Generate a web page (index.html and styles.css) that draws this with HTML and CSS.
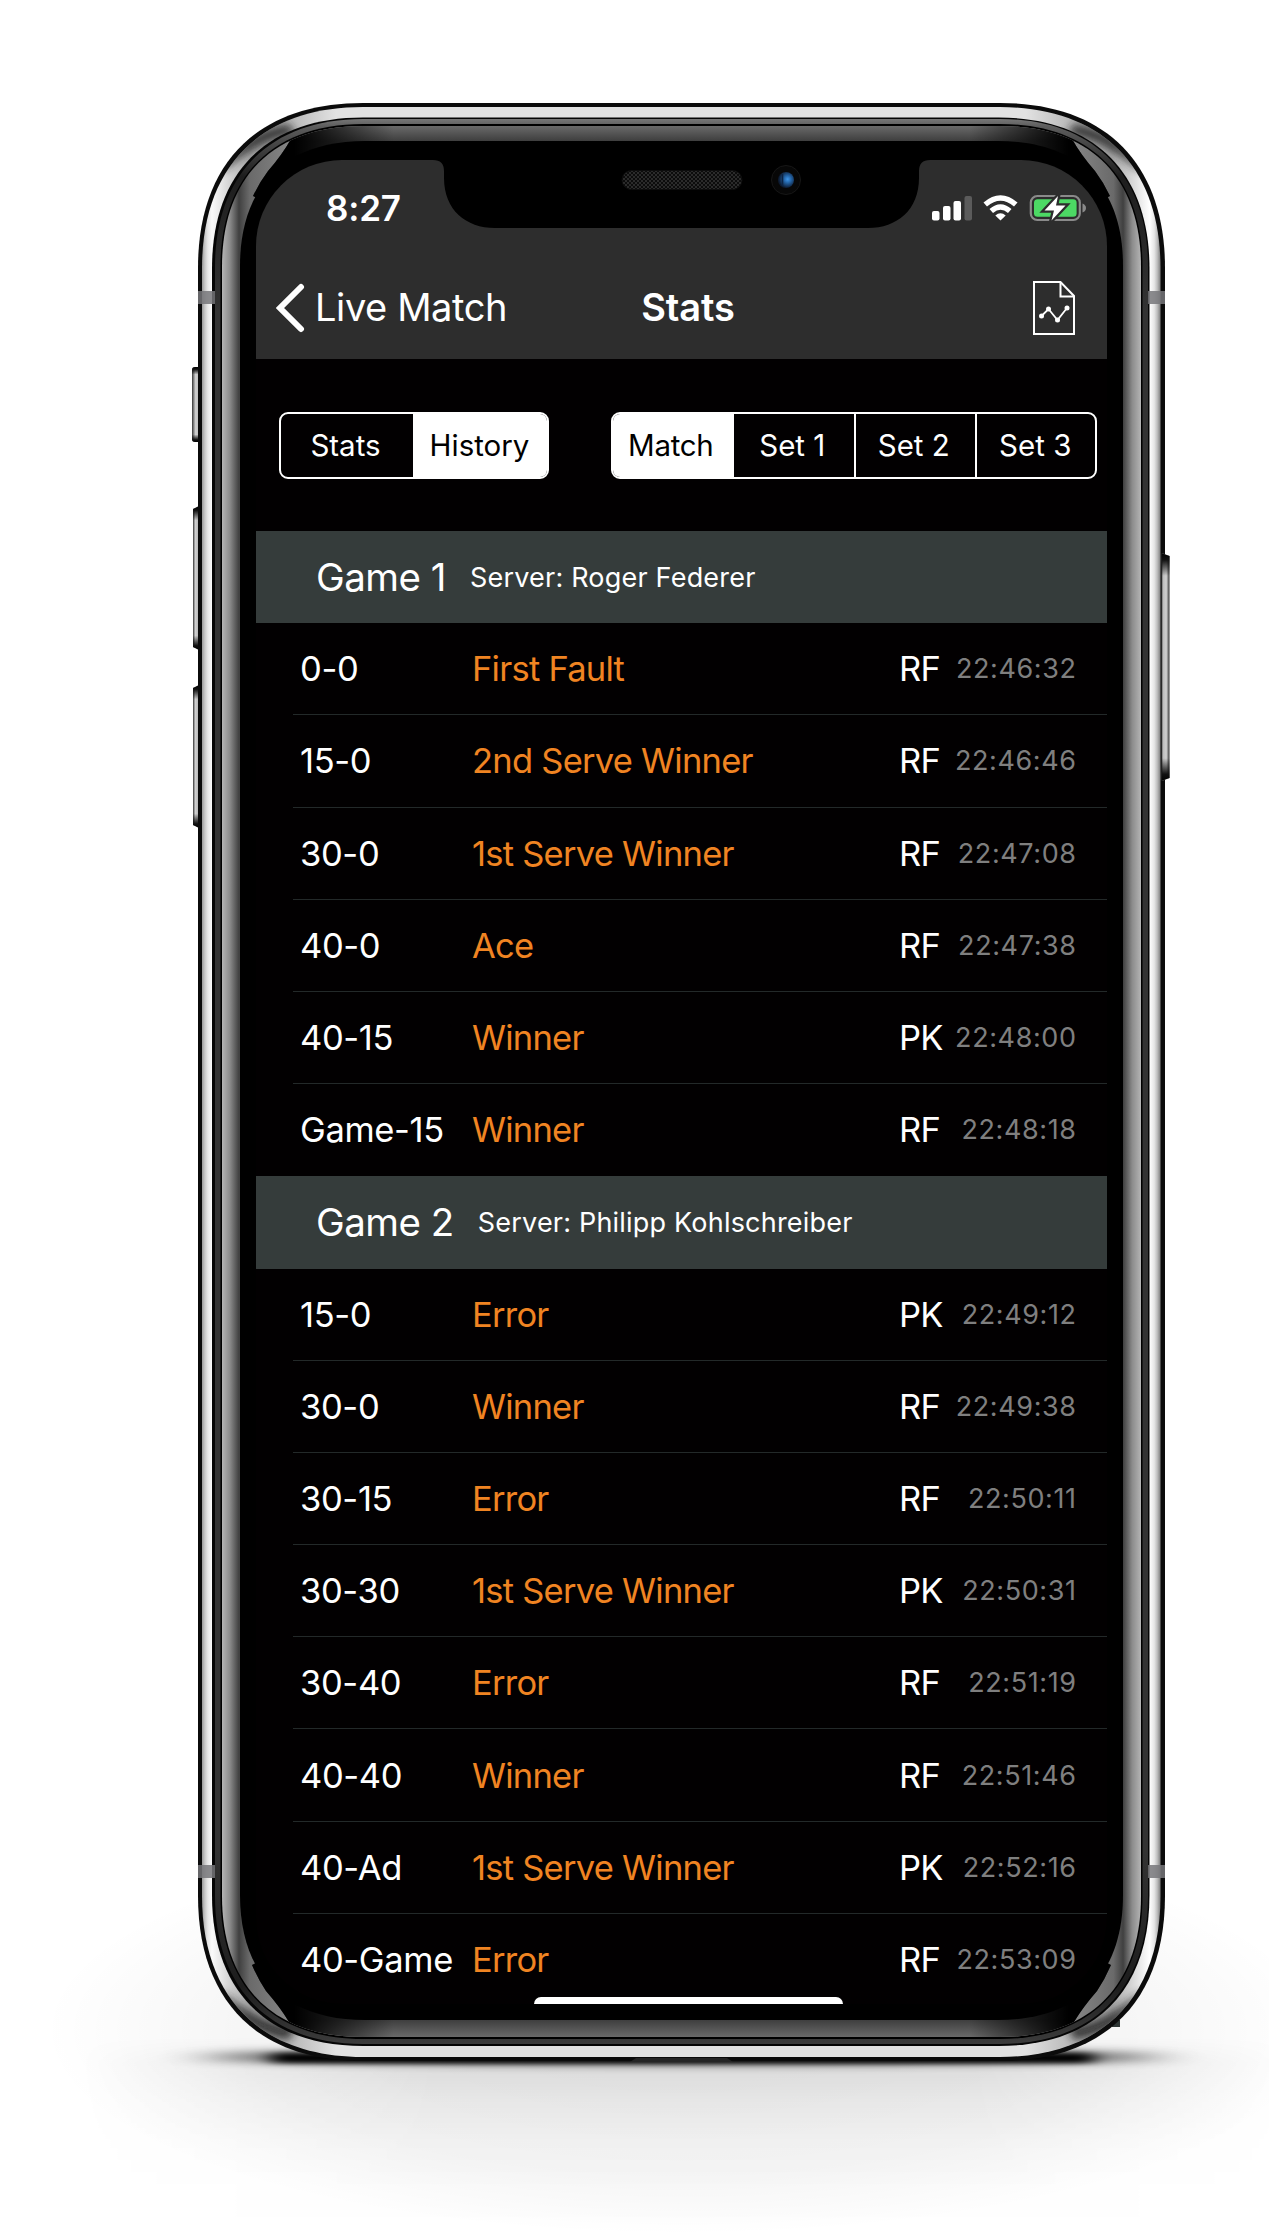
FILE: index.html
```html
<!DOCTYPE html>
<html lang="en">
<head>
<meta charset="utf-8">
<title>Live Match Stats</title>
<link rel="stylesheet" href="styles.css">
</head>
<body>
<main class="stage">
  <svg class="frame" viewBox="0 0 1269 2237" aria-hidden="true">
    <defs>
      <filter id="soft" x="-20%" y="-400%" width="140%" height="900%"><feGaussianBlur stdDeviation="26 5"/></filter>
      <filter id="tight" x="-20%" y="-200%" width="140%" height="500%"><feGaussianBlur stdDeviation="10 2.5"/></filter>
      <filter id="blur4"><feGaussianBlur stdDeviation="4"/></filter>
      <radialGradient id="haze" cx=".5" cy=".5" r=".5">
        <stop offset="0" stop-color="#000" stop-opacity=".06"/>
        <stop offset=".7" stop-color="#000" stop-opacity=".035"/>
        <stop offset="1" stop-color="#000" stop-opacity="0"/>
      </radialGradient>
      <linearGradient id="floor" gradientUnits="userSpaceOnUse" x1="0" y1="2037" x2="0" y2="2237">
        <stop offset="0" stop-color="#000" stop-opacity="0"/>
        <stop offset=".13" stop-color="#000" stop-opacity=".1"/>
        <stop offset=".32" stop-color="#000" stop-opacity=".05"/>
        <stop offset=".52" stop-color="#000" stop-opacity=".02"/>
        <stop offset=".75" stop-color="#000" stop-opacity=".005"/>
        <stop offset="1" stop-color="#000" stop-opacity="0"/>
      </linearGradient>
      <linearGradient id="spread" gradientUnits="userSpaceOnUse" x1="80" y1="0" x2="1269" y2="0">
        <stop offset="0" stop-color="#000"/><stop offset=".12" stop-color="#777"/><stop offset=".3" stop-color="#fff"/>
        <stop offset=".75" stop-color="#fff"/><stop offset=".9" stop-color="#777"/><stop offset="1" stop-color="#111"/>
      </linearGradient>
      <mask id="spreadMask"><rect y="2000" width="1269" height="237" fill="url(#spread)"/></mask>
      <linearGradient id="silver" gradientUnits="userSpaceOnUse" x1="202" y1="0" x2="1160" y2="0">
        <stop offset="0" stop-color="#9a9a9a"/><stop offset=".003" stop-color="#c8c8c8"/><stop offset=".006" stop-color="#e6e6e6"/>
        <stop offset=".0104" stop-color="#fafafa"/><stop offset=".05" stop-color="#a8a8a8"/><stop offset=".09" stop-color="#b5b5b5"/><stop offset=".14" stop-color="#e2e2e2"/>
        <stop offset=".86" stop-color="#e2e2e2"/><stop offset=".91" stop-color="#b5b5b5"/><stop offset=".95" stop-color="#a8a8a8"/><stop offset=".989" stop-color="#fff"/>
        <stop offset=".994" stop-color="#e6e6e6"/><stop offset=".997" stop-color="#c0c0c0"/><stop offset="1" stop-color="#888"/>
      </linearGradient>
      <linearGradient id="glass" gradientUnits="userSpaceOnUse" x1="222" y1="0" x2="1141" y2="0">
        <stop offset="0" stop-color="#b4b4b4"/><stop offset=".0085" stop-color="#8c8c8c"/><stop offset=".0185" stop-color="#404040"/>
        <stop offset=".03" stop-color="#6a6a6a"/><stop offset=".08" stop-color="#8a8a8a"/>
        <stop offset=".92" stop-color="#8a8a8a"/><stop offset=".97" stop-color="#6a6a6a"/>
        <stop offset=".9805" stop-color="#404040"/><stop offset=".9905" stop-color="#8c8c8c"/><stop offset="1" stop-color="#b4b4b4"/>
      </linearGradient>
      <linearGradient id="bandTop" gradientUnits="userSpaceOnUse" x1="0" y1="126" x2="0" y2="141">
        <stop offset="0" stop-color="#6a6a6a"/><stop offset="1" stop-color="#3e3e3e"/>
      </linearGradient>
      <linearGradient id="bandBottom" gradientUnits="userSpaceOnUse" x1="0" y1="2020" x2="0" y2="2037">
        <stop offset="0" stop-color="#3e3e3e"/><stop offset="1" stop-color="#6a6a6a"/>
      </linearGradient>
      <linearGradient id="fade" gradientUnits="userSpaceOnUse" x1="270" y1="0" x2="1093" y2="0">
        <stop offset="0" stop-color="#000"/><stop offset=".03" stop-color="#000"/><stop offset=".15" stop-color="#000" stop-opacity="0"/>
        <stop offset=".85" stop-color="#000" stop-opacity="0"/><stop offset=".97" stop-color="#000"/><stop offset="1" stop-color="#000"/>
      </linearGradient>
      <linearGradient id="rim" gradientUnits="userSpaceOnUse" x1="0" y1="119" x2="0" y2="2044">
        <stop offset="0" stop-color="#777"/><stop offset=".004" stop-color="#5c5c5c"/><stop offset=".03" stop-color="#1d1d1d"/><stop offset=".1" stop-color="#333"/>
        <stop offset=".9" stop-color="#333"/><stop offset=".97" stop-color="#1d1d1d"/><stop offset="1" stop-color="#3c3c3c"/>
      </linearGradient>
      <linearGradient id="keyV" x1="0" y1="0" x2="0" y2="1">
        <stop offset="0" stop-color="#000"/><stop offset=".03" stop-color="#111"/><stop offset=".1" stop-color="#000" stop-opacity="0"/>
        <stop offset=".9" stop-color="#000" stop-opacity="0"/><stop offset=".97" stop-color="#111"/><stop offset="1" stop-color="#000"/>
      </linearGradient>
      <linearGradient id="keyL" x1="0" y1="0" x2="1" y2="0">
        <stop offset="0" stop-color="#333"/><stop offset=".2" stop-color="#888"/><stop offset=".4" stop-color="#d0d0d0"/><stop offset=".8" stop-color="#bdbdbd"/><stop offset="1" stop-color="#444"/>
      </linearGradient>
      <linearGradient id="keyR" x1="1" y1="0" x2="0" y2="0">
        <stop offset="0" stop-color="#333"/><stop offset=".2" stop-color="#888"/><stop offset=".4" stop-color="#d0d0d0"/><stop offset=".8" stop-color="#bdbdbd"/><stop offset="1" stop-color="#444"/>
      </linearGradient>
      <pattern id="mesh" width="4" height="4" patternUnits="userSpaceOnUse">
        <rect width="4" height="4" fill="#0c0c0c"/><path d="M0 0h2v2h-2zM2 2h2v2h-2z" fill="#2b2b2b"/>
      </pattern>
      <radialGradient id="lens" cx=".6" cy=".45" r=".55">
        <stop offset="0" stop-color="#3f97e8"/><stop offset=".4" stop-color="#2465a8"/><stop offset="1" stop-color="#0c1a30"/>
      </radialGradient>
      <clipPath id="silverClip"><path d="M363 107H999.500c102 0 161 59 161 161V1896c0 102-59 161-161 161H363c-102 0-161-59-161-161V268c0-102 59-161 161-161z"/></clipPath>
      <clipPath id="glassClip"><path d="M363 126H1000c90 0 141 51 141 141V1896c0 90-51 141-141 141H363c-90 0-141-51-141-141V267c0-90 51-141 141-141z"/></clipPath>
    </defs>

    <!-- floor shadow -->
    <ellipse cx="682" cy="2030" rx="640" ry="205" fill="url(#haze)"/>
    <rect y="2037" width="1269" height="200" fill="url(#floor)" mask="url(#spreadMask)"/>
    <ellipse cx="682" cy="2057" rx="480" ry="7" fill="#000" opacity=".75" filter="url(#soft)"/>
    <rect x="270" y="2053" width="824" height="10" rx="5" fill="#000" filter="url(#tight)"/>

    <!-- side keys -->
    <rect x="192" y="367" width="9" height="75" rx="3" fill="url(#keyL)"/><rect x="192" y="367" width="9" height="75" rx="3" fill="url(#keyV)"/>
    <path d="M193 509l6-3v144l-6-3z" fill="url(#keyL)"/><path d="M193 509l6-3v144l-6-3z" fill="url(#keyV)"/>
    <path d="M193 688l6-3v143l-6-3z" fill="url(#keyL)"/><path d="M193 688l6-3v143l-6-3z" fill="url(#keyV)"/>
    <rect x="1112" y="2020" width="8" height="7" fill="#2e3635"/>

    <!-- metal band -->
    <path d="M363 103H1000c105 0 165 60 165 165V1896c0 105-60 165-165 165H363c-105 0-165-60-165-165V268c0-105 60-165 165-165z" fill="#0b0b0b"/>
    <path d="M1161.500 553l8 3v222l-8 3z" fill="url(#keyR)"/><path d="M1161.500 553l8 3v222l-8 3z" fill="url(#keyV)"/>
    <path d="M363 107H999.500c102 0 161 59 161 161V1896c0 102-59 161-161 161H363c-102 0-161-59-161-161V268c0-102 59-161 161-161z" fill="url(#silver)"/>
    <g clip-path="url(#silverClip)">
      <g filter="url(#blur4)" fill="#222" opacity=".85">
        <path d="M220 172Q245 130 288 124L296 134Q258 140 228 168z"/>
        <path d="M1143 172Q1118 130 1075 124L1067 134Q1105 140 1135 168z"/>
        <path d="M220 1990Q245 2034 288 2040L296 2028Q258 2022 228 1996z"/>
        <path d="M1143 1990Q1118 2034 1075 2040L1067 2028Q1105 2022 1135 1996z"/>
      </g>
    </g>
    <path d="M363 117.500H998.500c96 0 151 55 151 151V1895c0 96-55 151-151 151H363c-96 0-151-55-151-151V268.500c0-96 55-151 151-151z" fill="#050505"/>
    <path d="M363 119H1000c93 0 148 55 148 148V1896c0 93-55 148-148 148H363c-93 0-148-55-148-148V267c0-93 55-148 148-148z" fill="url(#rim)"/>
    <path d="M363 124H1000c90 0 142.500 52.500 142.500 142.500V1896.500c0 90-52.500 142.500-142.500 142.500H363c-90 0-142.500-52.500-142.500-142.500V266.500c0-90 52.500-142.500 142.500-142.500z" fill="#000"/>
    <path d="M636 2058H727L733 2062H630z" fill="#242424"/>

    <!-- glass edge -->
    <g clip-path="url(#glassClip)">
      <rect x="222" y="126" width="919" height="1911" fill="url(#glass)"/>
      <path id="upper" d="M291 139Q282 155 268 171Q259 183 253 196L340 240H1023L1110 196Q1104 183 1095 171Q1081 155 1072 139V120H291z" fill="url(#bandTop)"/>
      <path d="M291 139Q282 155 268 171Q259 183 253 196L340 240H1023L1110 196Q1104 183 1095 171Q1081 155 1072 139V120H291z" fill="url(#fade)"/>
      <path d="M289 2022Q280 2007 266 1991Q258 1979 252 1965L340 1920H1023L1111 1965Q1105 1979 1097 1991Q1083 2007 1074 2022V2040H289z" fill="url(#bandBottom)"/>
      <path d="M289 2022Q280 2007 266 1991Q258 1979 252 1965L340 1920H1023L1111 1965Q1105 1979 1097 1991Q1083 2007 1074 2022V2040H289z" fill="url(#fade)"/>
    </g>
    <path d="M365 141H998c80 0 125 45 125 125V1895c0 80-45 125-125 125H365c-80 0-125-45-125-125V266c0-80 45-125 125-125z" fill="#000"/>

    <!-- antenna bands -->
    <g fill="#77777a" opacity=".85">
      <rect x="198" y="291" width="17" height="13"/><rect x="1148" y="291" width="17" height="13"/>
      <rect x="198" y="1865" width="17" height="13"/><rect x="1148" y="1865" width="17" height="13"/>
    </g>
  </svg>

  <section class="screen">
    <header class="top">
      <div class="status">
        <span class="clock">8:27</span>
        <svg class="indicators" width="156" height="28" viewBox="0 0 156 28" aria-hidden="true">
          <g fill="#fff">
            <rect x="0" y="17" width="7.500" height="9.500" rx="2"/>
            <rect x="11" y="12" width="7.500" height="14.500" rx="2"/>
            <rect x="21.500" y="7" width="7.500" height="19.500" rx="2"/>
            <rect x="32.500" y="2" width="7.500" height="24.500" rx="2" opacity=".22"/>
            <path d="M51.500 8.500Q68.500-6 85.500 8.500L82 12.500Q68.500 1 55 12.500z"/>
            <path d="M57.500 15Q68.500 5.500 79.500 15L76 19Q68.500 12.500 61 19z"/>
            <path d="M63.300 21.500Q68.500 17 73.700 21.500L68.500 26.500z"/>
          </g>
          <rect x="98.800" y="2" width="49" height="24" rx="6.500" fill="none" stroke="#8a8a8a" stroke-width="2.200"/>
          <path d="M150.500 9.500q3.500 1.500 3.500 4.500t-3.500 4.500z" fill="#8a8a8a"/>
          <rect x="102" y="5.200" width="42.600" height="17.600" rx="3.500" fill="#4cd964"/>
          <path d="M126 2L112.500 16.500H122L119.500 26.500L133.500 11.500H124z" fill="#fff" stroke="#2d2d2d" stroke-width="4.500" paint-order="stroke"/>
        </svg>
      </div>
      <nav class="nav">
        <a class="back">
          <svg width="29" height="50" viewBox="0 0 29 50" aria-hidden="true"><path d="M25 4L4 25L25 46" fill="none" stroke="#fff" stroke-width="6" stroke-linecap="round" stroke-linejoin="miter"/></svg>
          <span>Live Match</span>
        </a>
        <h1 class="title">Stats</h1>
        <svg class="report" width="42" height="54" viewBox="0 0 42 54" aria-hidden="true">
          <g fill="none" stroke="#fff" stroke-width="2"><path d="M1 1H27.500L41 15V53H1z"/><path d="M27.500 1V15.500H41"/><path d="M8.500 35L15.500 28L24.500 39L34 27" stroke-width="1.800"/></g>
          <g fill="#fff"><circle cx="8.500" cy="35" r="2.500"/><circle cx="15.500" cy="28" r="2.500"/><circle cx="24.500" cy="39" r="2.500"/><circle cx="34" cy="27" r="2.500"/></g>
        </svg>
      </nav>
      <svg class="notch" width="497" height="70" viewBox="0 0 497 70" aria-hidden="true">
        <path d="M0-1V0Q11 0 11 11V18C11 50 33 68 62 68H435C464 68 486 50 486 18V11Q486 0 497 0V-1z" fill="#000"/>
        <rect x="189" y="10.500" width="120" height="19" rx="9.500" fill="url(#mesh)" stroke="#0d0d0d"/>
        <circle cx="353" cy="20" r="14.500" fill="#070707" stroke="#161616"/>
        <circle cx="353" cy="20" r="8" fill="url(#lens)"/>
        <path d="M349.500 14v12" stroke="#0c2444" stroke-width="1.500"/>
      </svg>
    </header>

    <div class="filters">
      <div class="segmented view"><span>Stats</span><span class="on">History</span></div>
      <div class="segmented scope"><span class="on">Match</span><span>Set 1</span><span>Set 2</span><span>Set 3</span></div>
    </div>

    <div class="log">
      <h2 class="game"><b>Game 1</b><small>Server: Roger Federer</small></h2>
      <ol class="points">
        <li><span class="score">0-0</span><span class="shot">First Fault</span><span class="who">RF</span><time>22:46:32</time></li>
        <li><span class="score">15-0</span><span class="shot">2nd Serve Winner</span><span class="who">RF</span><time>22:46:46</time></li>
        <li><span class="score">30-0</span><span class="shot">1st Serve Winner</span><span class="who">RF</span><time>22:47:08</time></li>
        <li><span class="score">40-0</span><span class="shot">Ace</span><span class="who">RF</span><time>22:47:38</time></li>
        <li><span class="score">40-15</span><span class="shot">Winner</span><span class="who">PK</span><time>22:48:00</time></li>
        <li><span class="score">Game-15</span><span class="shot">Winner</span><span class="who">RF</span><time>22:48:18</time></li>
      </ol>
      <h2 class="game"><b>Game 2</b><small>Server: Philipp Kohlschreiber</small></h2>
      <ol class="points">
        <li><span class="score">15-0</span><span class="shot">Error</span><span class="who">PK</span><time>22:49:12</time></li>
        <li><span class="score">30-0</span><span class="shot">Winner</span><span class="who">RF</span><time>22:49:38</time></li>
        <li><span class="score">30-15</span><span class="shot">Error</span><span class="who">RF</span><time>22:50:11</time></li>
        <li><span class="score">30-30</span><span class="shot">1st Serve Winner</span><span class="who">PK</span><time>22:50:31</time></li>
        <li><span class="score">30-40</span><span class="shot">Error</span><span class="who">RF</span><time>22:51:19</time></li>
        <li><span class="score">40-40</span><span class="shot">Winner</span><span class="who">RF</span><time>22:51:46</time></li>
        <li><span class="score">40-Ad</span><span class="shot">1st Serve Winner</span><span class="who">PK</span><time>22:52:16</time></li>
        <li><span class="score">40-Game</span><span class="shot">Error</span><span class="who">RF</span><time>22:53:09</time></li>
      </ol>
    </div>
    <div class="home-bar"></div>
  </section>
</main>
</body>
</html>
```
FILE: styles.css
```css
* { box-sizing: border-box; }

body {
  margin: 0;
  background: #fff;
  color: #fff;
  font-family: Inter, "Liberation Sans", sans-serif;
}

.stage {
  position: relative;
  width: 1269px;
  height: 2237px;
  padding: 160px 162px 0 256px;
  overflow: hidden;
}

.frame {
  position: absolute;
  inset: 0;
  width: 1269px;
  height: 2237px;
}

.screen {
  position: relative;
  display: flex;
  flex-direction: column;
  height: 1844px;
  overflow: hidden;
  border-radius: 86px;
  background: #020001;
  white-space: nowrap;
}

.top {
  position: relative;
  flex: none;
  height: 198.500px;
  background: #2d2d2d;
}

.notch {
  position: absolute;
  top: 0;
  left: 177px;
}

.status {
  display: flex;
  justify-content: space-between;
  align-items: center;
  height: 98px;
  padding: 0 19px 0 70px;
}

.clock {
  margin-top: -2px;
  font-size: 35px;
  font-weight: 600;
  letter-spacing: -.2px;
}

.indicators { margin-top: -2px; }

.nav {
  display: grid;
  grid-template-columns: 1fr auto 1fr;
  align-items: center;
  height: 100px;
  padding: 0 7px 0 20px;
}

.back {
  display: flex;
  align-items: center;
  gap: 10px;
  font-size: 38px;
  letter-spacing: -.4px;
}

.back span,
.title { padding-bottom: 2px; }

.title {
  margin: 0;
  font-size: 38px;
  font-weight: 600;
  letter-spacing: -.1px;
}

.report {
  justify-self: end;
  margin-right: 25px;
}

.filters {
  display: flex;
  flex: none;
  justify-content: space-between;
  height: 172.500px;
  padding: 53px 10px 0 23px;
}

.segmented {
  display: grid;
  height: 67px;
  border: 2px solid #fff;
  border-radius: 9px;
  overflow: hidden;
  font-size: 29.500px;
}

.view { width: 270px; grid-template-columns: 132px 1fr; }
.scope { width: 486px; grid-template-columns: repeat(4, 1fr); }

.segmented span {
  display: flex;
  align-items: center;
  justify-content: center;
  padding-right: 3px;
}

.segmented .on {
  padding-right: 1px;
  background: #fff;
  color: #000;
}

.scope .on { padding-right: 5px; letter-spacing: -.3px; }
.segmented span:not(.on) + span:not(.on) { border-left: 2px solid #fff; }
.segmented span:last-child:not(.on) { padding-right: 1px; }

.log { flex: none; }

.game {
  display: flex;
  align-items: center;
  gap: 24px;
  height: 92.200px;
  margin: 0;
  padding-left: 60px;
  background: #353c3b;
  font-weight: 400;
}

.game b { font-size: 38.500px; font-weight: 400; letter-spacing: -.5px; }
.game small { font-size: 27px; letter-spacing: .2px; }

.points { margin: 0; padding: 0; list-style: none; }

.points li {
  display: grid;
  grid-template-columns: 172px 1fr 56px 121px;
  align-items: center;
  height: 92.200px;
  margin-left: 37px;
  padding: 0 31px 0 7px;
  border-bottom: 1.500px solid #232929;
  font-size: 34.500px;
}

.points li:last-child { border-bottom-color: transparent; }
.score { letter-spacing: -.35px; }
.shot { color: #f08422; letter-spacing: -.75px; }
.who { letter-spacing: -.8px; }

.points time {
  justify-self: end;
  margin-right: -.6px;
  color: #7f7f7f;
  font-size: 27px;
  letter-spacing: .6px;
}

.home-bar {
  position: absolute;
  left: 278px;
  bottom: 0;
  width: 309px;
  height: 7px;
  border-radius: 7px 7px 0 0;
  background: #fff;
}
```
